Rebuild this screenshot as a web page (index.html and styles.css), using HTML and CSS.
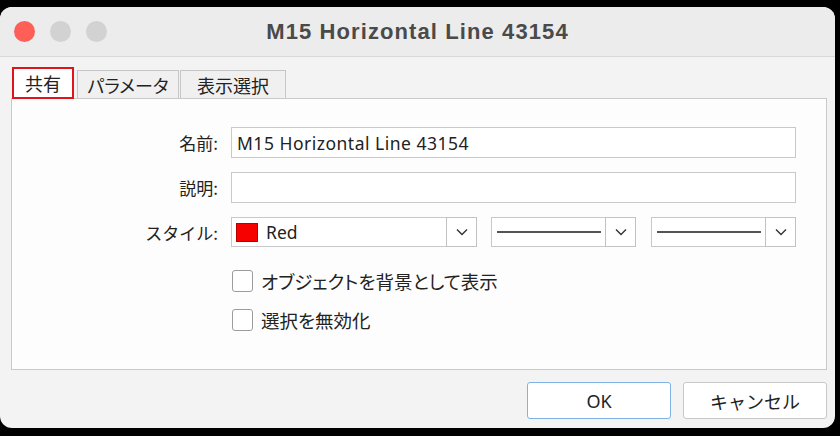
FILE: index.html
```html
<!DOCTYPE html>
<html lang="ja">
<head>
  <meta charset="UTF-8">
  <title>M15 Horizontal Line 43154</title>
  <link rel="stylesheet" href="styles.css">
</head>
<body>

<div class="window">
  <div class="titlebar">
    <div class="lights">
      <span class="light red"></span>
      <span class="light"></span>
      <span class="light"></span>
    </div>
    <div class="title">M15 Horizontal Line 43154</div>
    <div></div>
  </div>

  <div class="content">
    <div class="tabs">
      <div class="tab active">共有</div>
      <div class="tab params">パラメータ</div>
      <div class="tab display">表示選択</div>
    </div>

    <div class="panel">
      <div class="form">
        <label class="label">名前:</label>
        <div class="input">M15 Horizontal Line 43154</div>

        <label class="label">説明:</label>
        <div class="input"></div>

        <label class="label">スタイル:</label>
        <div class="style-row">
          <div class="select color">
            <span class="swatch"></span>
            <span class="select-text">Red</span>
            <span class="drop"><svg width="12" height="8" viewBox="0 0 12 8"><path d="M1 1.5l5 5 5-5" fill="none" stroke="#333" stroke-width="1.4"/></svg></span>
          </div>
          <div class="select line">
            <span class="line-sample"></span>
            <span class="drop"><svg width="12" height="8" viewBox="0 0 12 8"><path d="M1 1.5l5 5 5-5" fill="none" stroke="#333" stroke-width="1.4"/></svg></span>
          </div>
          <div class="select line">
            <span class="line-sample"></span>
            <span class="drop"><svg width="12" height="8" viewBox="0 0 12 8"><path d="M1 1.5l5 5 5-5" fill="none" stroke="#333" stroke-width="1.4"/></svg></span>
          </div>
        </div>

        <div></div>
        <div class="checks">
          <div class="check"><span class="box"></span>オブジェクトを背景として表示</div>
          <div class="check"><span class="box"></span>選択を無効化</div>
        </div>
      </div>
    </div>

    <div class="buttons">
      <div class="btn primary">OK</div>
      <div class="btn">キャンセル</div>
    </div>
  </div>
</div>

</body>
</html>
```

FILE: styles.css
```css
* { box-sizing: border-box; }
body { margin:0; padding-top:7px; background:#000; font-family:"Noto Sans CJK JP", "Noto Sans", sans-serif; color:#222; }

.window { width:835px; height:421px; background:#f3f3f3; border-radius:12px; overflow:hidden; }

.titlebar { height:50px; display:grid; grid-template-columns:1fr auto 1fr; align-items:center; background:#ececec; border-bottom:1px solid #d8d8d8; }
.lights { display:flex; gap:15px; padding-left:14px; }
.light { width:21px; height:21px; border-radius:50%; background:#d2d2d2; }
.light.red { background:#fe5f57; }
.title { font-family:"Liberation Sans", Arial, sans-serif; font-weight:bold; font-size:22px; letter-spacing:1.1px; color:#4a4a4a; }

.content { padding:9px 8px 0 11px; }

.tabs { display:flex; align-items:flex-end; height:32px; font-feature-settings:"palt"; }
.tab { height:28px; display:flex; align-items:center; justify-content:center; font-size:18px; background:#f0f0f0; border:1px solid #c6c6c6; border-bottom:none; }
.tab.active { height:32px; width:62px; background:#fff; border:2px solid #e0141b; margin-left:1px; margin-right:3px; margin-bottom:-1px; position:relative; z-index:1; }
.tab.params { width:102px; margin-right:1px; }
.tab.display { width:106px; }

.panel { height:272px; background:#fdfdfd; border:1px solid #c9c9c9; padding-top:28px; padding-right:31px; }

.form { display:grid; grid-template-columns:206px 1fr; column-gap:13px; row-gap:14px; align-items:center; }
.label { text-align:right; font-size:17px; }
.input { height:31px; background:#fff; border:1px solid #c9c9c9; font-family:"Noto Sans", "Noto Sans CJK JP", sans-serif; font-size:17.5px; letter-spacing:0.5px; padding-left:5px; display:flex; align-items:center; }

.style-row { display:flex; gap:14px; }
.select { height:30px; background:#fff; border:1px solid #c9c9c9; display:flex; align-items:center; }
.select.color { width:246px; padding-left:4px; }
.select.line { width:145px; padding-left:5px; }
.select.line:last-child { margin-left:1px; }
.swatch { width:22px; height:19px; background:#f70000; border:1px solid #b00; }
.select-text { flex:1; font-family:"Noto Sans", sans-serif; font-size:17.5px; padding-left:8px; }
.line-sample { flex:1; height:1.5px; background:#555; margin-right:4px; }
.drop { width:31px; height:30px; margin:-1px -1px -1px 0; border:1px solid #c2c2c2; background:#fff; display:flex; align-items:center; justify-content:center; }

.checks { display:flex; flex-direction:column; gap:13px; padding-top:7px; }
.check { display:flex; align-items:center; font-size:18.5px; font-feature-settings:"palt"; }
.box { width:21px; height:22px; border:1.5px solid #9c9c9c; border-radius:3px; background:#fff; margin-left:1px; margin-right:8px; }

.buttons { display:flex; justify-content:flex-end; gap:12px; margin-top:12px; }
.btn { width:144px; height:37px; background:#fff; border:1px solid #c8c8c8; border-radius:3px; display:flex; align-items:center; justify-content:center; font-size:18px; }
.btn.primary { border-color:#7fb3e6; font-family:"Noto Sans", sans-serif; }
```
